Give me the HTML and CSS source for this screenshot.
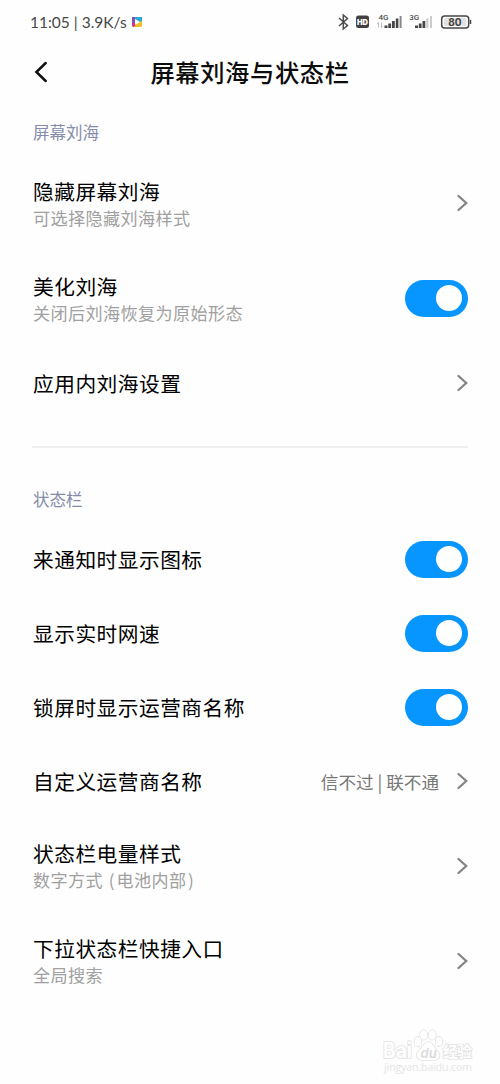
FILE: index.html
```html
<!DOCTYPE html>
<html lang="zh-CN">
<head>
<meta charset="utf-8">
<title>屏幕刘海与状态栏</title>
<link rel="stylesheet" href="styles.css">
</head>
<body>
<svg class="defs" width="0" height="0">
  <symbol id="chevron" viewBox="0 0 12 18"><path d="M2.500 2 L10.200 9 L2.500 16" fill="none" stroke="#858585" stroke-width="2.300" stroke-linecap="round" stroke-linejoin="miter"/></symbol>
</svg>
<div class="screen">
  <div class="status">
    <span class="clock">11:05 | 3.9K/s</span>
    <svg class="app" width="12" height="12" viewBox="0 0 12 12">
      <path d="M1 1h5v10H2.500Q1 11 1 9z" fill="#d8367c"/><path d="M1 1h10v4H4v2H1z" fill="#8650b4"/><path d="M4 1h5.500Q11 1 11 2.500V6H4z" fill="#27acd5"/><path d="M6 7l5-2v4.500q0 1.500-1.500 1.500H3z" fill="#f4bd24"/><path d="M4 3l5 3-5 3z" fill="#fff"/>
    </svg>
    <svg class="indicators" width="134" height="24" viewBox="0 0 134 24">
      <path d="M5 8l8.500 7.500L9.300 19V5l4.200 3.500L5 16" fill="none" stroke="#4b4b4b" stroke-width="1.500"/>
      <rect x="22" y="5.500" width="13" height="12.500" rx="2.500" fill="#424242"/>
      <text x="23" y="14.800" class="hd" textLength="11">HD</text>
      <text x="44.500" y="9.500" class="net">4G</text>
      <path d="M44.500 17.500v-5l-1 1.500M47.500 12.500v5l1-1.500" fill="none" stroke="#aaa" stroke-width=".8"/>
      <path d="M50.500 15.500h3V18h-3zM54.300 13.500h2.800V18h-2.800zM58 11h2.800v7H58zM61.800 8.500h2.600V18h-2.600z" fill="#474747"/>
      <path d="M65.600 6h2v12h-2z" fill="#888"/>
      <text x="75.200" y="9.500" class="net">3G</text>
      <path d="M81 15.500h3V18h-3zM84.800 13.500h2.800V18h-2.800zM88.500 11h2.800v7h-2.800z" fill="#474747"/>
      <path d="M92.300 8.500h2.200V18h-2.200zM96 6h2v12h-2z" fill="#ccc"/>
      <rect x="107.700" y="6" width="27" height="12" rx="3" fill="#fff" stroke="#454545" stroke-width="1.500"/>
      <rect x="110" y="8" width="22.400" height="8" rx="1.500" fill="#e2e2e2"/>
      <path d="M136.500 10v4" stroke="#454545" stroke-width="1.500"/>
      <text x="121" y="15.700" text-anchor="middle" class="bat">80</text>
    </svg>
  </div>
  <header class="header">
    <svg class="back" width="16" height="24" viewBox="0 0 16 24"><path d="M13.700 3 L4.400 12 L13.700 21" fill="none" stroke="#111" stroke-width="2.500" stroke-linecap="round"/></svg>
    <h1 class="title">屏幕刘海与状态栏</h1>
  </header>

  <section class="group">
    <h2 class="label">屏幕刘海</h2>
    <div class="row tall"><div class="text"><div class="name">隐藏屏幕刘海</div><div class="sub">可选择隐藏刘海样式</div></div><svg class="chev"><use href="#chevron"/></svg></div>
    <div class="row tall"><div class="text"><div class="name">美化刘海</div><div class="sub">关闭后刘海恢复为原始形态</div></div><span class="switch"><i class="knob"></i></span></div>
    <div class="row"><div class="name">应用内刘海设置</div><svg class="chev"><use href="#chevron"/></svg></div>
  </section>

  <section class="group divided">
    <h2 class="label">状态栏</h2>
    <div class="row"><div class="name">来通知时显示图标</div><span class="switch"><i class="knob"></i></span></div>
    <div class="row"><div class="name">显示实时网速</div><span class="switch"><i class="knob"></i></span></div>
    <div class="row"><div class="name">锁屏时显示运营商名称</div><span class="switch"><i class="knob"></i></span></div>
    <div class="row"><div class="name">自定义运营商名称</div><span class="value">信不过 | 联不通</span><svg class="chev"><use href="#chevron"/></svg></div>
    <div class="row tall"><div class="text"><div class="name">状态栏电量样式</div><div class="sub">数字方式 <span class="paren">(</span>电池内部<span class="paren">)</span></div></div><svg class="chev"><use href="#chevron"/></svg></div>
    <div class="row tall"><div class="text"><div class="name">下拉状态栏快捷入口</div><div class="sub">全局搜索</div></div><svg class="chev"><use href="#chevron"/></svg></div>
  </section>

  <svg class="watermark" width="100" height="54" viewBox="0 0 100 54">
    <g class="wm-outline">
      <text x="3" y="30.500" class="wm-logo" textLength="29" lengthAdjust="spacingAndGlyphs">Bai</text>
      <ellipse cx="38" cy="14.500" rx="3.300" ry="4.600"/><ellipse cx="43.700" cy="8" rx="3.500" ry="4.800"/><ellipse cx="52.300" cy="8" rx="3.500" ry="4.800"/><ellipse cx="59" cy="14.500" rx="3.300" ry="4.600"/>
      <path d="M48.500 15c4 0 5 5 8.500 8 4.500 4 2.500 10-2.500 10H42c-5 0-7-6-2.500-10 3.500-3 5-8 9-8z"/>
      <text x="63" y="30" class="wm-cn" textLength="29">经验</text>
    </g>
    <text x="40.500" y="30.500" class="wm-du">du</text>
    <text x="4" y="44" class="wm-url" textLength="88">jingyan.baidu.com</text>
  </svg>
</div>
</body>
</html>
```
FILE: styles.css
```css
* { box-sizing: border-box; }

body {
  margin: 0;
  background: #fefefe;
  font-family: "Noto Sans CJK SC", "Noto Sans", sans-serif;
}

.defs { position: absolute; }

.screen {
  position: relative;
  width: 500px;
  height: 1084px;
  overflow: hidden;
}

.status {
  display: flex;
  align-items: center;
  height: 44px;
  padding: 0 28px 0 30px;
}

.clock {
  width: 96px;
  font: 15.500px/24px Lato, sans-serif;
  color: #484848;
  white-space: nowrap;
}

.app { margin-left: 5px; }

.indicators {
  margin-left: auto;
  overflow: visible;
  margin-right: 4px;
}

.hd { font: 900 7.500px Inter, sans-serif; fill: #fff; }
.net { font: 500 8px Roboto, sans-serif; fill: #505050; }
.bat { font: 700 10px Inter, sans-serif; fill: #444; }

.header {
  display: grid;
  grid-template-columns: 16px 1fr 16px;
  align-items: center;
  height: 56px;
  padding: 0 32px;
}

.title {
  margin: 0;
  font-size: 24.300px;
  letter-spacing: .6px;
  line-height: 36px;
  font-weight: 500;
  text-align: center;
  color: #0c0c0c;
}

.group { padding: 0 32px; }

.label {
  margin: 0;
  height: 55.500px;
  padding: 20px 0 0 1px;
  font-size: 16.500px;
  line-height: 24px;
  font-weight: 400;
  color: #858ba9;
}

.row {
  display: flex;
  align-items: center;
  height: 74px;
  padding-left: 1px;
}

.tall { height: 95px; }

.name {
  font-size: 20.700px;
  letter-spacing: .5px;
  line-height: 28px;
  color: #000;
}

.text { padding-top: 1px; }
.text .name { line-height: 27px; }

.sub {
  font-size: 17.100px;
  letter-spacing: .4px;
  line-height: 25px;
  color: #a0a0a0;
}

.paren { margin: 0 1.500px; }

.value {
  margin-left: auto;
  font-size: 17.600px;
  color: #777;
}

.chev {
  width: 12px;
  height: 18px;
  margin-left: auto;
}

.value + .chev { margin-left: 17px; }

.switch {
  display: flex;
  justify-content: flex-end;
  align-items: center;
  width: 63px;
  height: 37px;
  margin-left: auto;
  padding-right: 6px;
  border-radius: 19px;
  background: #0796ff;
}

.knob {
  width: 26px;
  height: 26px;
  border-radius: 50%;
  background: #fff;
}

.divided { margin-top: 26px; }

.divided .label {
  height: 76.500px;
  padding-top: 39.500px;
  border-top: 2px solid #eee;
}

.watermark {
  position: absolute;
  left: 380px;
  top: 1027px;
}

.wm-outline {
  fill: #fff;
  stroke: #e2e2e2;
  stroke-width: 1.600px;
  paint-order: stroke;
}

.wm-logo { font: 700 21px Inter, sans-serif; }
.wm-cn { font: 700 15px "Noto Sans CJK SC", sans-serif; }
.wm-du { font: italic 700 13px Inter, sans-serif; fill: #ddd; }
.wm-url { font: 10.500px "Open Sans", sans-serif; fill: #e4e4e4; }
```
